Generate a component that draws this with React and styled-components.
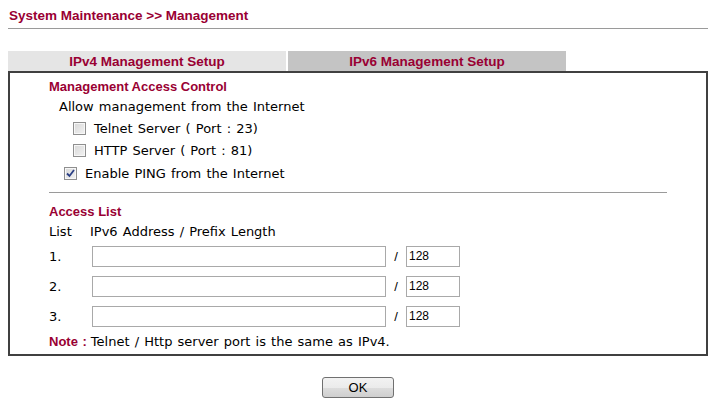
import React from 'react'
import styled, { createGlobalStyle } from 'styled-components'

const crimson = '#990033'

const GlobalStyle = createGlobalStyle`
  body {
    margin: 0;
    background: #ffffff;
    font-family: "DejaVu Sans", Verdana, sans-serif;
    font-size: 13px;
    word-spacing: 1px;
    color: #000;
  }
`

const Page = styled.div`
  width: 700px;
  padding: 8px 0 0 8px;
`

const Title = styled.div`
  height: 20px;
  padding-left: 1px;
  border-bottom: 1px solid #9a9a9a;
  font-family: "Liberation Sans", Arial, sans-serif;
  font-weight: bold;
  font-size: 13.5px;
  line-height: 15px;
  word-spacing: 0;
  color: ${crimson};
`

const Tabs = styled.div`
  display: flex;
  gap: 2px;
  margin-top: 22px;
  height: 20px;
`

const Tab = styled.div`
  width: 278px;
  display: flex;
  align-items: center;
  justify-content: center;
  background: ${(p) => (p.$active ? '#c4c4c4' : '#e5e5e5')};
  font-family: "Liberation Sans", Arial, sans-serif;
  font-weight: bold;
  font-size: 13.5px;
  word-spacing: 0;
  color: ${crimson};
`

const Box = styled.div`
  border: 2px solid #404040;
  padding: 4px 0 3px 39px;
  height: 274px;
`

const Row = styled.div`
  display: flex;
  align-items: center;
  white-space: pre;
  height: ${(p) => p.$h || 20}px;
  padding-left: ${(p) => p.$indent || 0}px;
`

const Heading = styled.span`
  font-family: "Liberation Sans", Arial, sans-serif;
  font-weight: bold;
  font-size: 13px;
  word-spacing: 0;
  color: ${crimson};
`

const Check = styled.span`
  width: 11px;
  height: 11px;
  border: 1px solid #8f8f8f;
  background: linear-gradient(135deg, #d8d8d8 0%, #f2f2f2 100%);
  box-shadow: inset 0 0 0 1px #f7f7f7;
  margin-right: 8px;
  display: flex;
  align-items: center;
  justify-content: center;
  flex: none;
`

const Separator = styled.div`
  height: 1px;
  width: 618px;
  background: #9a9a9a;
  margin: 7px 0 8px;
`

const ListHead = styled.span`
  width: 41px;
`

const Num = styled.span`
  width: 43px;
`

const Field = styled.div`
  width: ${(p) => p.$w}px;
  height: 21px;
  border: 1px solid #a9a9a9;
  display: flex;
  align-items: center;
  padding-left: 2px;
  box-sizing: border-box;
  font-family: "Liberation Sans", Arial, sans-serif;
  font-size: 12px;
  color: #000;
`

const Slash = styled.span`
  width: 20px;
  text-align: center;
  font-family: "Liberation Sans", Arial, sans-serif;
  font-size: 13px;
`

const NoteLabel = styled.span`
  font-family: "Liberation Sans", Arial, sans-serif;
  font-weight: bold;
  font-size: 13px;
  color: ${crimson};
  margin-right: 4px;
`

const Footer = styled.div`
  display: flex;
  justify-content: center;
  align-items: flex-start;
  padding-top: 21px;
`

const Button = styled.button`
  width: 72px;
  height: 21px;
  border: 1px solid #707070;
  border-radius: 3px;
  background: linear-gradient(#f2f2f2 0%, #ebebeb 50%, #dddddd 51%, #cfcfcf 100%);
  font-family: "Liberation Sans", Arial, sans-serif;
  font-size: 13px;
  color: #000;
  padding: 0;
`

const CheckMark = () => (
  <svg width="9" height="9" viewBox="0 0 9 9">
    <path d="M1 4.5 L3.5 7 L8 1" fill="none" stroke="#2b3f85" strokeWidth="1.8" />
  </svg>
)

const Checkbox = ({ checked }) => <Check>{checked && <CheckMark />}</Check>

const entries = ['1.', '2.', '3.']

export default function App() {
  return (
    <>
      <GlobalStyle />
      <Page>
        <Title>System Maintenance &gt;&gt; Management</Title>
        <Tabs>
          <Tab>IPv4 Management Setup</Tab>
          <Tab $active>IPv6 Management Setup</Tab>
        </Tabs>
        <Box>
          <Row $h={18}>
            <Heading>Management Access Control</Heading>
          </Row>
          <Row $h={22} $indent={10}>Allow management from the Internet</Row>
          <Row $h={22} $indent={24}>
            <Checkbox />
            Telnet Server ( Port : 23)
          </Row>
          <Row $h={23} $indent={24}>
            <Checkbox />
            HTTP Server ( Port : 81)
          </Row>
          <Row $h={23} $indent={15}>
            <Checkbox checked />
            Enable PING from the Internet
          </Row>
          <Separator />
          <Row $h={21}>
            <Heading>Access List</Heading>
          </Row>
          <Row $h={19}>
            <ListHead>List</ListHead>
            IPv6 Address / Prefix Length
          </Row>
          {entries.map((n) => (
            <Row key={n} $h={30}>
              <Num>{n}</Num>
              <Field $w={294} />
              <Slash>/</Slash>
              <Field $w={54}>128</Field>
            </Row>
          ))}
          <Row>
            <NoteLabel>Note :</NoteLabel>
            Telnet / Http server port is the same as IPv4.
          </Row>
        </Box>
        <Footer>
          <Button>OK</Button>
        </Footer>
      </Page>
    </>
  )
}
